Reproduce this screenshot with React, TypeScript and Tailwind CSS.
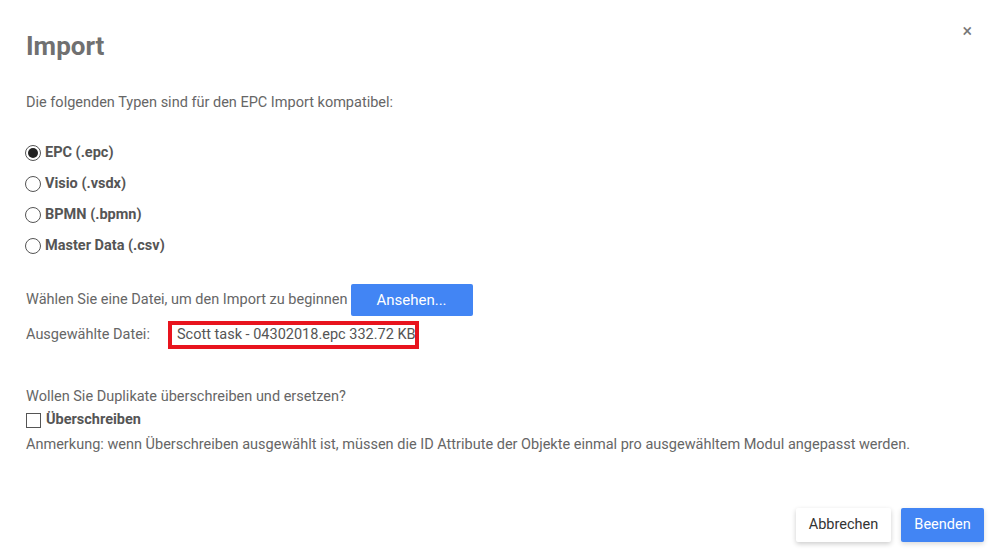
import { useState } from "react";

const types = ["EPC (.epc)", "Visio (.vsdx)", "BPMN (.bpmn)", "Master Data (.csv)"];

export default function App() {
  const [selected, setSelected] = useState(0);

  return (
    <div className="relative w-[1000px] h-[557px] bg-white font-['Roboto',sans-serif] text-[14.5px] text-[#666666]">
      <button className="absolute right-[28px] top-[22px] text-[18px] leading-none text-[#777]">×</button>

      <div className="flex flex-col pl-[26px] pr-[16px] pt-[30px]">
        <h1 className="text-[26px] font-bold leading-[32px] text-[#707070]">Import</h1>

        <p className="mt-[33px] leading-[16px]">Die folgenden Typen sind für den EPC Import kompatibel:</p>

        <div className="mt-[34px] flex flex-col gap-[15px]">
          {types.map((t, i) => (
            <label key={t} className="flex items-center h-[16px] cursor-pointer" onClick={() => setSelected(i)}>
              <span className="flex h-[16px] w-[16px] items-center justify-center rounded-full border border-[#555] -ml-[1px]">
                {selected === i && <span className="h-[10px] w-[10px] rounded-full bg-[#222]" />}
              </span>
              <span className="ml-[4px] font-bold text-[#555]">{t}</span>
            </label>
          ))}
        </div>

        <div className="mt-[30px] flex items-center h-[32px]">
          <span>Wählen Sie eine Datei, um den Import zu beginnen</span>
          <button className="ml-[3px] h-[32px] w-[122px] rounded-[2px] bg-[#4285f4] text-[15px] text-white">
            Ansehen...
          </button>
        </div>

        <div className="mt-[5px] flex items-center h-[28px]">
          <span className="w-[142px]">Ausgewählte Datei:</span>
          <span className="flex h-[28px] w-[251px] items-center whitespace-nowrap border-[4px] border-[#e8141e] pl-[5px] text-[14.5px] text-[#555]">
            Scott task - 04302018.epc 332.72 KB
          </span>
        </div>

        <p className="mt-[40px] leading-[16px]">Wollen Sie Duplikate überschreiben und ersetzen?</p>

        <label className="mt-[7px] flex items-center h-[16px]">
          <span className="h-[15px] w-[15px] border border-[#555] bg-white" />
          <span className="ml-[5px] font-bold text-[#555]">Überschreiben</span>
        </label>

        <p className="mt-[9px] leading-[16px]">
          Anmerkung: wenn Überschreiben ausgewählt ist, müssen die ID Attribute der Objekte einmal pro ausgewähltem Modul angepasst werden.
        </p>

        <div className="mt-[55px] flex justify-end gap-[10px]">
          <button className="h-[34px] w-[95px] rounded-[2px] bg-white text-[14.5px] text-[#333] shadow-[0_2px_5px_rgba(0,0,0,0.2)]">
            Abbrechen
          </button>
          <button className="h-[34px] w-[83px] rounded-[2px] bg-[#4285f4] text-[14.5px] text-white shadow-[0_2px_5px_rgba(0,0,0,0.15)]">
            Beenden
          </button>
        </div>
      </div>
    </div>
  );
}
